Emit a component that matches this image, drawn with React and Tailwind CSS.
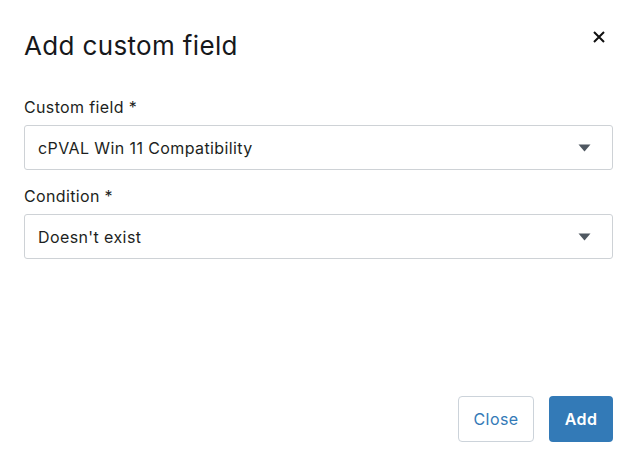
const Caret = () => (
  <svg width="13" height="8" viewBox="0 0 13 8" className="shrink-0">
    <path d="M0.5 0.5 H12.5 L6.5 7.5 Z" fill="#4f5861" />
  </svg>
);

const SelectBox = ({ value }) => (
  <div className="flex h-[45px] items-center justify-between rounded-[3px] border border-[#ced2d6] bg-white pl-[13px] pr-[21px]">
    <span className="text-base tracking-[0.4px] text-[#1d1f22]">{value}</span>
    <Caret />
  </div>
);

export default function App() {
  return (
    <div
      className="flex h-[455px] w-[634px] flex-col bg-white pl-6 pr-[21px] text-[#1d1f22]"
      style={{ fontFamily: "Inter, 'Noto Sans', sans-serif" }}
    >
      {/* Header */}
      <div className="flex items-start justify-between pt-[30px]">
        <h1 className="text-[26px] leading-8 font-normal tracking-[0.35px] text-[#16181b]">Add custom field</h1>
        <button className="mt-[1px] mr-[8px] p-0" aria-label="Close">
          <svg width="12" height="12" viewBox="0 0 12 12">
            <path d="M1 1 L11 11 M11 1 L1 11" stroke="#111" strokeWidth="2" />
          </svg>
        </button>
      </div>

      {/* Fields */}
      <div className="mt-[33px] flex flex-col">
        <label className="mb-1.5 text-base leading-6 tracking-[0.35px]">Custom field *</label>
        <SelectBox value="cPVAL Win 11 Compatibility" />

        <label className="mt-[14px] mb-1.5 text-base leading-6 tracking-[0.35px]">Condition *</label>
        <SelectBox value="Doesn't exist" />
      </div>

      {/* Footer */}
      <div className="mt-auto flex justify-end gap-[15px] pb-[13px]">
        <button className="h-[46px] w-[76px] rounded border border-[#ccd3da] bg-white text-base font-normal tracking-[0.4px] text-[#337ab7]">
          Close
        </button>
        <button className="h-[46px] w-[64px] rounded bg-[#337ab7] text-base font-semibold tracking-[0.4px] text-white">
          Add
        </button>
      </div>
    </div>
  );
}
